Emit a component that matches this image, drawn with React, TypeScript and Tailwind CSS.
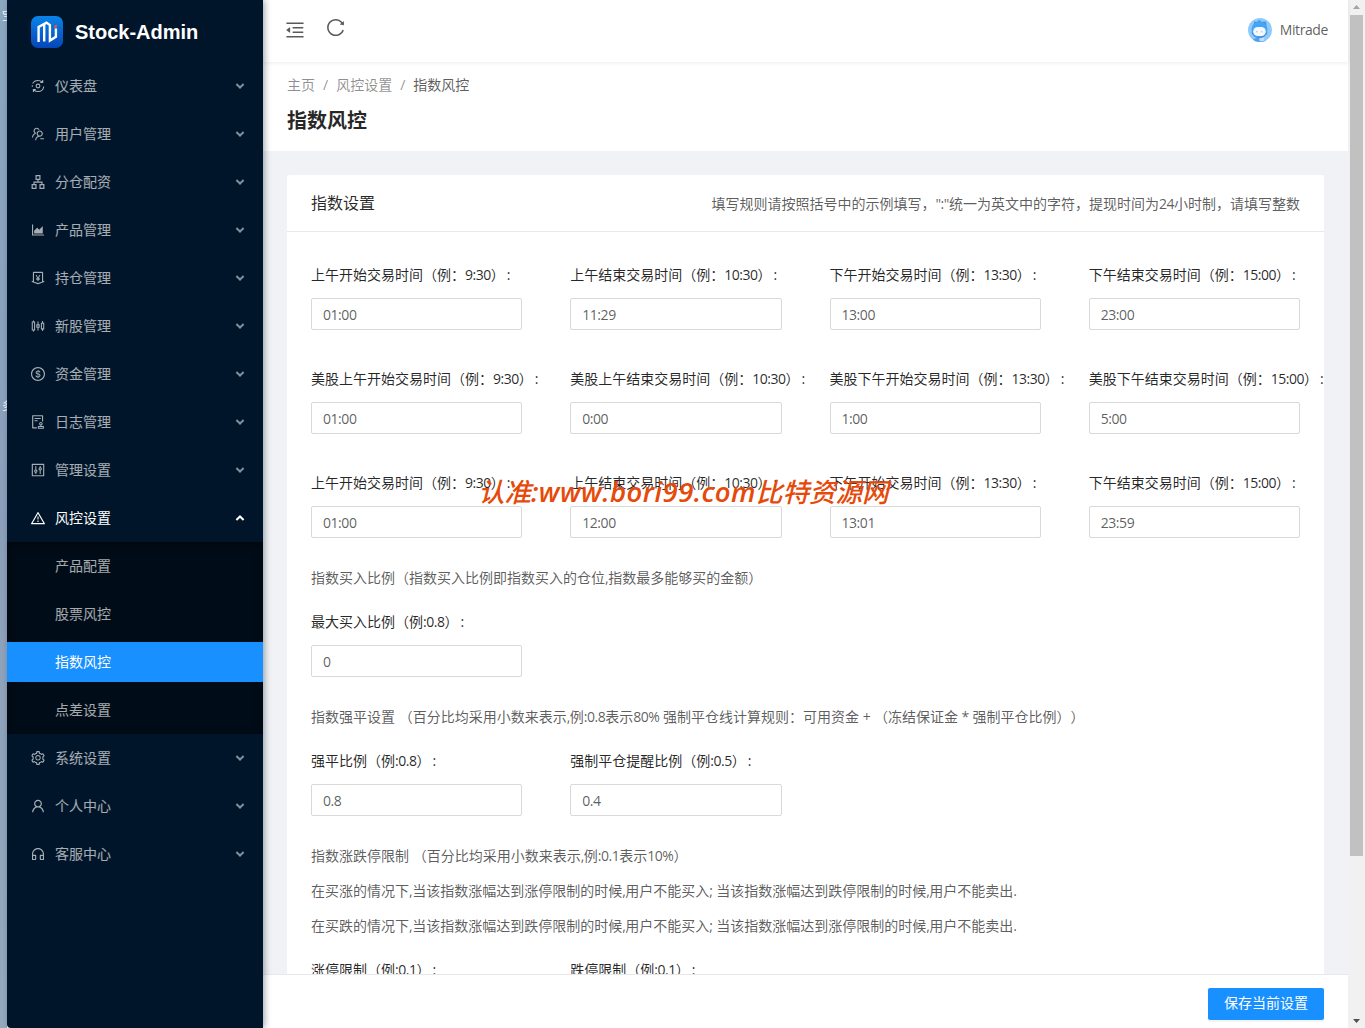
import type { ReactNode } from 'react'
import type { IconType } from 'react-icons'
import {
  AiOutlineApartment,
  AiOutlineAreaChart,
  AiOutlineAudit,
  AiOutlineControl,
  AiOutlineCustomerService,
  AiOutlineDollarCircle,
  AiOutlineMenuFold,
  AiOutlineMoneyCollect,
  AiOutlineReload,
  AiOutlineSetting,
  AiOutlineSliders,
  AiOutlineUser,
  AiOutlineUsergroupDelete,
  AiOutlineWarning,
} from 'react-icons/ai'

type MenuItem = {
  label: string
  icon: IconType
  children?: string[]
}

function GaugeIcon({ className }: { className?: string }) {
  return (
    <svg viewBox="-1 -1 16 16" className={className} fill="none" stroke="currentColor" strokeWidth="1.1">
      <circle cx="7" cy="7" r="1.9" />
      <path d="M1.6 4.6C2.600 2.700 4.600 1.500 7 1.500c1.700 0 3 .5 4.200 1.600M12.700 7.500c-.3 3-2.700 5-5.700 5-1.700 0-3.200-.6-4.200-1.700" />
      <path d="M11.700 1v2.400H9.300M2.400 13v-2.400h2.400M1.300 6.200v1.600" />
    </svg>
  )
}

const MENU: MenuItem[] = [
  { label: '仪表盘', icon: GaugeIcon as IconType },
  { label: '用户管理', icon: AiOutlineUsergroupDelete },
  { label: '分仓配资', icon: AiOutlineApartment },
  { label: '产品管理', icon: AiOutlineAreaChart },
  { label: '持仓管理', icon: AiOutlineMoneyCollect },
  { label: '新股管理', icon: AiOutlineSliders },
  { label: '资金管理', icon: AiOutlineDollarCircle },
  { label: '日志管理', icon: AiOutlineAudit },
  { label: '管理设置', icon: AiOutlineControl },
  { label: '风控设置', icon: AiOutlineWarning, children: ['产品配置', '股票风控', '指数风控', '点差设置'] },
  { label: '系统设置', icon: AiOutlineSetting },
  { label: '个人中心', icon: AiOutlineUser },
  { label: '客服中心', icon: AiOutlineCustomerService },
]

const ACTIVE = '指数风控'

const TIME_ROWS = [
  [
    { label: '上午开始交易时间（例：9:30）', value: '01:00' },
    { label: '上午结束交易时间（例：10:30）', value: '11:29' },
    { label: '下午开始交易时间（例：13:30）', value: '13:00' },
    { label: '下午结束交易时间（例：15:00）', value: '23:00' },
  ],
  [
    { label: '美股上午开始交易时间（例：9:30）', value: '01:00' },
    { label: '美股上午结束交易时间（例：10:30）', value: '0:00' },
    { label: '美股下午开始交易时间（例：13:30）', value: '1:00' },
    { label: '美股下午结束交易时间（例：15:00）', value: '5:00' },
  ],
  [
    { label: '上午开始交易时间（例：9:30）', value: '01:00' },
    { label: '上午结束交易时间（例：10:30）', value: '12:00' },
    { label: '下午开始交易时间（例：13:30）', value: '13:01' },
    { label: '下午结束交易时间（例：15:00）', value: '23:59' },
  ],
]

// Latin runs are set a little tighter than the CJK text around them
function Mixed({ text }: { text: string }) {
  return (
    <>
      {text.split(/([\x21-\x7e]+)/).map((part, i) =>
        i % 2 ? <span key={i} className="tracking-[-0.47px]">{part}</span> : part,
      )}
    </>
  )
}

function Chevron({ up }: { up?: boolean }) {
  return (
    <svg viewBox="0 0 10 6" className={up ? 'h-1.5 w-2.5' : 'h-1.5 w-2.5 opacity-80'} fill="none" stroke="currentColor" strokeWidth="2">
      <path d={up ? 'M1.400 5 5 1.500 8.600 5' : 'M1.400 1 5 4.500 8.600 1'} />
    </svg>
  )
}

function Logo() {
  return (
    <svg viewBox="0 0 32 32" className="size-8">
      <defs>
        <linearGradient id="logo" x1="0" y1="0" x2="0" y2="1">
          <stop offset="0" stopColor="#0a84e8" />
          <stop offset="1" stopColor="#0546b8" />
        </linearGradient>
      </defs>
      <rect width="32" height="32" rx="7" fill="url(#logo)" />
      <g fill="none" stroke="#fff" strokeWidth="2.4">
        <path d="M7.600 26V11L15.500 6.600l3.400 2.400V24.600l6-3.800V12.500" />
        <path d="M13.200 8v17.500" />
      </g>
      <path d="M23.200 9.800l2.600-1.400v3.200l-2.600.6z" fill="#f0563a" />
    </svg>
  )
}

function Avatar() {
  return (
    <svg viewBox="0 0 24 24" className="size-6">
      <clipPath id="avatar">
        <circle cx="12" cy="12" r="12" />
      </clipPath>
      <g clipPath="url(#avatar)">
        <rect width="24" height="24" fill="#90caf9" />
        <path d="M6 3.500 8.500 4l3-2 2 2 4.500-.5.500 4H6z" fill="#4a90dc" />
        <circle cx="11.500" cy="11.500" r="8" fill="#42a5f5" />
        <path d="M4 14.500c1 3.500 4 5 7.500 5s6-1.500 7.500-5" stroke="#4583d0" strokeWidth="1" fill="none" />
        <rect x="5.200" y="9" width="12.600" height="9" rx="4.500" fill="#f4f8ff" />
        <path d="M8 14q.8-1 1.600 0M12.800 14q.8-1 1.600 0" stroke="#9aa8dc" strokeWidth=".8" fill="none" />
        <path d="M4 24c.5-3 3-4.200 7.500-4.200S17.500 21 18 24z" fill="#4fa0ee" />
        <path d="M11 20.500l5-1 1 3-5 1z" fill="#c5def8" />
      </g>
    </svg>
  )
}

function Sidebar() {
  return (
    <aside className="relative z-20 flex w-64 shrink-0 flex-col rounded-bl bg-[#001529] shadow-[2px_0_6px_rgba(0,21,41,0.35)]">
      <div className="flex h-16 items-center gap-3 pl-6">
        <Logo />
        <h1 className="font-['Liberation_Sans',sans-serif] text-xl font-bold text-white">Stock-Admin</h1>
      </div>
      <nav className="-mt-0.5 text-sm text-white/65">
        {MENU.map(({ label, icon: Icon, children }) => (
          <div key={label}>
            <div className={children ? 'flex h-12 items-center pr-[18px] pl-[23px] text-white' : 'flex h-12 items-center pr-[18px] pl-[23px]'}>
              <Icon className="mr-[9px] size-4" />
              <span className="flex-1">{label}</span>
              <Chevron up={!!children} />
            </div>
            {children && (
              <div className="flex flex-col gap-2 bg-[#000c17] py-1 shadow-[inset_0_2px_8px_rgba(0,0,0,0.45)]">
                {children.map((child) => (
                  <div
                    key={child}
                    className={child === ACTIVE ? 'flex h-10 items-center bg-[#1890ff] pl-12 text-white' : 'flex h-10 items-center pl-12'}
                  >
                    {child}
                  </div>
                ))}
              </div>
            )}
          </div>
        ))}
      </nav>
    </aside>
  )
}

function Field({ label, value }: { label: string; value: string }) {
  return (
    <div className="h-[104px] min-w-0">
      <div className="flex h-10 items-center whitespace-nowrap text-black/85">
        <Mixed text={label} />
        <span className="ml-0.5">:</span>
      </div>
      <input
        defaultValue={value}
        className="mt-[3px] block h-8 w-full rounded-xs border border-[#d9d9d9] bg-white px-[11px] pt-px text-sm tracking-[-0.45px] text-black/65 outline-none"
      />
    </div>
  )
}

function FieldRow({ children }: { children: ReactNode }) {
  return <div className="grid grid-cols-4 gap-x-12">{children}</div>
}

function Note({ text }: { text: string }) {
  return (
    <p className="h-[35px] leading-[21px] whitespace-pre [text-spacing-trim:space-all]">
      <Mixed text={text} />
    </p>
  )
}

function Scrollbar() {
  return (
    <div className="flex w-[17px] shrink-0 flex-col items-center bg-[#f1f1f1]">
      <svg viewBox="0 0 17 15" className="h-[15px] w-full">
        <path d="M5 9h7L8.500 5z" fill="#a3a3a3" />
      </svg>
      <div className="h-[841px] w-[13px] bg-[#c1c1c1]" />
      <svg viewBox="0 0 17 15" className="mt-auto h-[15px] w-full">
        <path d="M5 6h7L8.500 10z" fill="#505050" />
      </svg>
    </div>
  )
}

export default function App() {
  return (
    <div className="relative flex h-[1028px] w-[1365px] overflow-hidden bg-white font-['Open_Sans','Noto_Sans_CJK_SC',sans-serif] text-sm text-black/65">
      <div className="flex w-[7px] shrink-0 flex-col overflow-hidden bg-linear-to-b from-[#8ba7c0] via-[#8b9fba] to-[#94a9bd] text-[11px] text-white">
        <span className="mt-2 ml-0.5">宝</span>
        <span className="mt-[374px] ml-0.5">多</span>
      </div>
      <Sidebar />

      <div className="relative flex min-w-0 flex-1 flex-col bg-[#f0f2f5]">
        <header className="relative z-10 flex h-[62px] shrink-0 items-center bg-white pr-5 pl-[21px] shadow-[0_1px_4px_rgba(0,21,41,0.08)]">
          <AiOutlineMenuFold className="-mt-0.5 size-[22px]" />
          <AiOutlineReload className="-mt-[7px] ml-[19px] size-[21px]" />
          <div className="-mt-0.5 ml-auto flex items-center gap-2">
            <Avatar />
            <span className="tracking-[-0.4px]">Mitrade</span>
          </div>
        </header>

        <div className="h-[89px] shrink-0 bg-white px-6 pt-3">
          <div className="flex h-[22px] items-center gap-2 text-black/45">
            <span>主页</span>
            <span>/</span>
            <span>风控设置</span>
            <span>/</span>
            <span className="text-black/65">指数风控</span>
          </div>
          <h2 className="mt-[9px] text-xl leading-8 font-bold text-black/85">指数风控</h2>
        </div>

        <main className="min-h-0 flex-1 overflow-hidden px-6 pt-6">
          <section className="rounded-xs bg-white">
            <div className="flex h-[57px] items-center justify-between border-b border-[#e8e8e8] px-6">
              <h3 className="text-base text-black/85">指数设置</h3>
              <span className="pt-0.5">
                <Mixed text={'填写规则请按照括号中的示例填写，":"统一为英文中的字符，提现时间为24小时制，请填写整数'} />
              </span>
            </div>
            <div className="h-[820px] px-6 pt-[23px]">
              {TIME_ROWS.map((row, i) => (
                <FieldRow key={i}>
                  {row.map((field) => (
                    <Field key={field.label} {...field} />
                  ))}
                </FieldRow>
              ))}
              <Note text="指数买入比例（指数买入比例即指数买入的仓位,指数最多能够买的金额）" />
              <FieldRow>
                <Field label="最大买入比例（例:0.8）" value="0" />
              </FieldRow>
              <Note text="指数强平设置 （百分比均采用小数来表示,例:0.8表示80% 强制平仓线计算规则：可用资金 + （冻结保证金 * 强制平仓比例））" />
              <FieldRow>
                <Field label="强平比例（例:0.8）" value="0.8" />
                <Field label="强制平仓提醒比例（例:0.5）" value="0.4" />
              </FieldRow>
              <Note text="指数涨跌停限制 （百分比均采用小数来表示,例:0.1表示10%）" />
              <Note text="在买涨的情况下,当该指数涨幅达到涨停限制的时候,用户不能买入; 当该指数涨幅达到跌停限制的时候,用户不能卖出." />
              <Note text="在买跌的情况下,当该指数涨幅达到跌停限制的时候,用户不能买入; 当该指数涨幅达到涨停限制的时候,用户不能卖出." />
              <FieldRow>
                <Field label="涨停限制（例:0.1）" value="0.1" />
                <Field label="跌停限制（例:0.1）" value="0.1" />
              </FieldRow>
            </div>
          </section>
        </main>

        <footer className="flex h-[54px] shrink-0 items-center justify-end border-t border-[#e8e8e8] bg-white pt-1 pr-6">
          <button className="h-8 w-[116px] rounded-xs bg-[#1890ff] pb-0.5 text-white shadow-[0_2px_0_rgba(0,0,0,0.045)]">
            保存当前设置
          </button>
        </footer>
      </div>

      <Scrollbar />

      <div className="absolute top-[473px] left-[478px] z-30 text-[26.500px] leading-[38px] font-medium whitespace-nowrap text-[#e64a0a] italic">
        认准<span className="text-[27.500px] font-semibold tracking-[0.45px]">:www.bori99.com</span>比特资源网
      </div>
    </div>
  )
}
